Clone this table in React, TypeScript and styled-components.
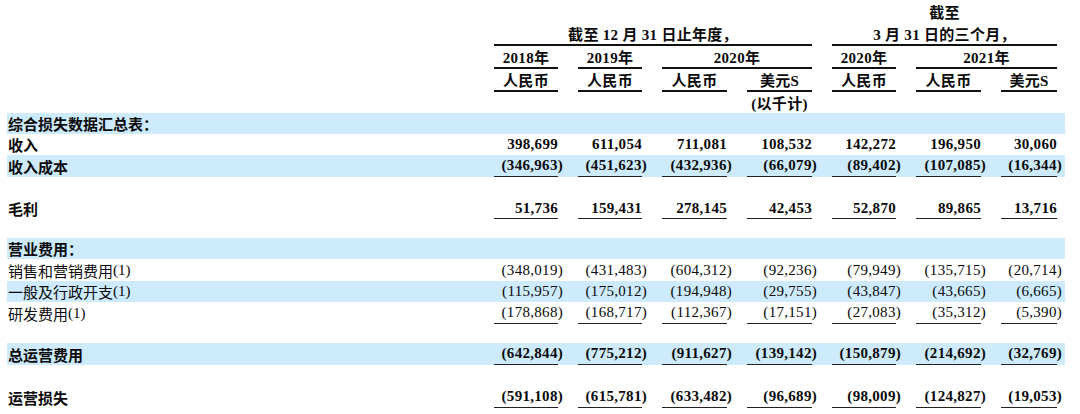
import React from "react";
import styled, { createGlobalStyle } from "styled-components";

const GlobalStyle = createGlobalStyle`
  html, body { margin: 0; padding: 0; background: #ffffff; }
  body {
    font-family: "Liberation Serif", "Noto Sans CJK SC", serif;
    color: #0a0a0a;
  }
`;

const COLS = "1fr 64px 64px 65px 65px 64px 65px 56px";

const Table = styled.div`
  width: 1058px;
  margin-left: 7px;
  display: flex;
  flex-direction: column;
`;

const Row = styled.div<{ $h: number; $blue?: boolean; $mt?: number }>`
  display: grid;
  grid-template-columns: ${COLS};
  column-gap: 20px;
  padding: 0 8px 0 1px;
  height: ${(p) => p.$h}px;
  margin-top: ${(p) => p.$mt ?? 0}px;
  background: ${(p) => (p.$blue ? "#cdebfc" : "transparent")};
`;

const HeadCell = styled.div<{ $col: number; $span?: number; $line?: boolean }>`
  grid-column: ${(p) => p.$col} / span ${(p) => p.$span ?? 1};
  display: flex;
  align-items: center;
  justify-content: center;
  font-size: 15px;
  font-weight: 700;
  letter-spacing: 0.3px;
  white-space: nowrap;
  border-bottom: ${(p) => (p.$line ? "2px solid #111" : "none")};
`;

const Label = styled.div<{ $bold?: boolean }>`
  grid-column: 1;
  display: flex;
  align-items: center;
  font-size: 15px;
  font-weight: ${(p) => (p.$bold ? 700 : 400)};
  white-space: nowrap;
`;

const Note = styled.span`
  font-family: "Liberation Serif", serif;
  font-size: 15px;
`;

const Num = styled.div<{ $bold?: boolean; $line?: boolean }>`
  display: flex;
  align-items: center;
  justify-content: flex-end;
  font-family: "Liberation Serif", serif;
  font-size: 15px;
  font-weight: ${(p) => (p.$bold ? 700 : 400)};
  letter-spacing: 0.3px;
  white-space: nowrap;
  border-bottom: ${(p) => (p.$line ? "1px solid #222" : "none")};
`;

const Paren = styled.span`
  margin-right: -5px;
`;

type DataRow = {
  label: string;
  note?: boolean;
  values?: string[];
  bold?: boolean;
  blue?: boolean;
  line?: boolean;
  h: number;
};

const rows: DataRow[] = [
  { label: "综合损失数据汇总表：", bold: true, blue: true, h: 21 },
  { label: "收入", bold: true, h: 21, values: ["398,699", "611,054", "711,081", "108,532", "142,272", "196,950", "30,060"] },
  { label: "收入成本", bold: true, blue: true, line: true, h: 22, values: ["(346,963)", "(451,623)", "(432,936)", "(66,079)", "(89,402)", "(107,085)", "(16,344)"] },
  { label: "", h: 21 },
  { label: "毛利", bold: true, line: true, h: 21, values: ["51,736", "159,431", "278,145", "42,453", "52,870", "89,865", "13,716"] },
  { label: "", h: 19 },
  { label: "营业费用：", bold: true, blue: true, h: 21 },
  { label: "销售和营销费用", note: true, h: 22, values: ["(348,019)", "(431,483)", "(604,312)", "(92,236)", "(79,949)", "(135,715)", "(20,714)"] },
  { label: "一般及行政开支", note: true, blue: true, h: 21, values: ["(115,957)", "(175,012)", "(194,948)", "(29,755)", "(43,847)", "(43,665)", "(6,665)"] },
  { label: "研发费用", note: true, line: true, h: 22, values: ["(178,868)", "(168,717)", "(112,367)", "(17,151)", "(27,083)", "(35,312)", "(5,390)"] },
  { label: "", h: 19 },
  { label: "总运营费用", bold: true, blue: true, line: true, h: 22, values: ["(642,844)", "(775,212)", "(911,627)", "(139,142)", "(150,879)", "(214,692)", "(32,769)"] },
  { label: "", h: 21 },
  { label: "运营损失", bold: true, line: true, h: 22, values: ["(591,108)", "(615,781)", "(633,482)", "(96,689)", "(98,009)", "(124,827)", "(19,053)"] },
];

function NumValue({ v }: { v: string }) {
  if (v.startsWith("(")) {
    return (
      <>
        {v.slice(0, -1)}
        <Paren>)</Paren>
      </>
    );
  }
  return <>{v}</>;
}

export default function App() {
  return (
    <>
      <GlobalStyle />
      <Table>
        <Row $h={23}>
          <HeadCell $col={6} $span={3}>截至</HeadCell>
        </Row>
        <Row $h={21}>
          <HeadCell $col={2} $span={4} $line>截至 12 月 31 日止年度，</HeadCell>
          <HeadCell $col={6} $span={3} $line>3 月 31 日的三个月，</HeadCell>
        </Row>
        <Row $h={21} $mt={2}>
          <HeadCell $col={2} $line>2018年</HeadCell>
          <HeadCell $col={3} $line>2019年</HeadCell>
          <HeadCell $col={4} $span={2} $line>2020年</HeadCell>
          <HeadCell $col={6} $line>2020年</HeadCell>
          <HeadCell $col={7} $span={2} $line>2021年</HeadCell>
        </Row>
        <Row $h={22} $mt={2}>
          <HeadCell $col={2} $line>人民币</HeadCell>
          <HeadCell $col={3} $line>人民币</HeadCell>
          <HeadCell $col={4} $line>人民币</HeadCell>
          <HeadCell $col={5} $line>美元S</HeadCell>
          <HeadCell $col={6} $line>人民币</HeadCell>
          <HeadCell $col={7} $line>人民币</HeadCell>
          <HeadCell $col={8} $line>美元S</HeadCell>
        </Row>
        <Row $h={22}>
          <HeadCell $col={5}>(以千计)</HeadCell>
        </Row>
        {rows.map((r, i) => (
          <Row key={i} $h={r.h} $blue={r.blue}>
            <Label $bold={r.bold}>
              {r.label}
              {r.note && <Note>(1)</Note>}
            </Label>
            {r.values?.map((v, j) => (
              <Num key={j} $bold={r.bold} $line={r.line}>
                <NumValue v={v} />
              </Num>
            ))}
          </Row>
        ))}
      </Table>
    </>
  );
}
